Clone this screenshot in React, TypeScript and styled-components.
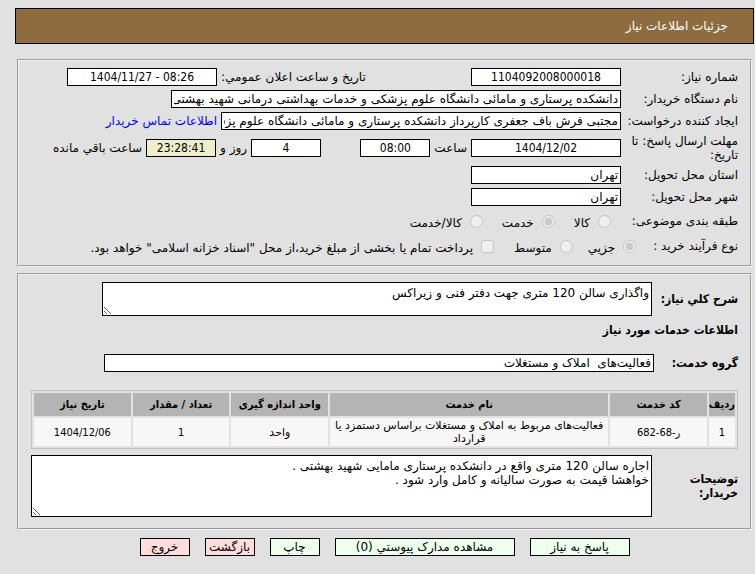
import React from "react";
import styled, { createGlobalStyle } from "styled-components";

const wide = `"DejaVu Sans", sans-serif`;
const condensed = `"DejaVu Sans Condensed", "DejaVu Sans", sans-serif`;

const GlobalStyle = createGlobalStyle`
  *, *::before, *::after { box-sizing: border-box; }
  body {
    margin: 0;
    background: #e1e1e1;
    color: #000;
    font: 12px/14px ${wide};
  }
  input, textarea, button { font: inherit; color: inherit; margin: 0; border-radius: 0; }
`;

const Page = styled.main`
  direction: rtl;
  padding: 8px 1px 8px 15px;
`;

const TitleBar = styled.header`
  display: flex;
  align-items: center;
  height: 36px;
  padding: 0 25px;
  border: 1px solid #000;
  background: #8f6c3f;
  color: #fff;
`;

const Title = styled.h1`
  margin: 0;
  font-size: 12px;
  font-weight: 400;
`;

const Panel = styled.section<{ $first?: boolean }>`
  display: flex;
  flex-direction: column;
  gap: 4px;
  margin: ${(p) => (p.$first ? "15px 2px 0" : "6px 2px 0")};
  padding: ${(p) => (p.$first ? "7px 12px 9px" : "7px 12px 11px")};
  border: 2px groove #f0f0f0;
`;

const Row = styled.div<{ $height?: number }>`
  display: flex;
  align-items: center;
  gap: 4px;
  min-height: ${(p) => p.$height ?? 18}px;
`;

const FieldLabel = styled.label`
  flex: 0 0 113px;
`;

const RowName = styled.span`
  flex: 0 0 113px;
  white-space: nowrap;
`;

const InlineLabel = styled.label`
  white-space: nowrap;
`;

const Announce = styled.div`
  display: flex;
  align-items: center;
  gap: 4px;
  margin-inline: auto 36px;
`;

const Remaining = styled.div`
  display: flex;
  align-items: center;
  gap: 4px;
  margin-inline: auto 22px;
`;

const TextBox = styled.input<{ $width: number; $number?: boolean; $tint?: boolean }>`
  flex: 0 1 ${(p) => p.$width}px;
  width: ${(p) => p.$width}px;
  min-width: 0;
  height: 18px;
  padding: 1px 2px;
  border: 1px solid #000;
  background: ${(p) => (p.$tint ? "#eeeecc" : "#fff")};
  font-family: ${(p) => (p.$number ? condensed : wide)};
  text-align: ${(p) => (p.$number ? "center" : "start")};
`;

const Choice = styled.label`
  display: flex;
  align-items: center;
  gap: 8px;
  white-space: nowrap;
  span { padding-top: 4px; }
`;

const Choices = styled.div<{ $gap: number; $inset: number }>`
  display: flex;
  gap: ${(p) => p.$gap}px;
  padding-inline-start: ${(p) => p.$inset}px;
`;

const Tick = styled.input`
  width: 13px;
  height: 13px;
  flex: none;
`;

const BoldLabel = styled.label<{ $width: number }>`
  flex: 0 0 ${(p) => p.$width}px;
  font-family: ${condensed};
  font-weight: 700;
`;

const TextArea = styled.textarea<{ $height: number }>`
  flex: 1 1 0;
  min-width: 0;
  height: ${(p) => p.$height}px;
  padding: 3px 2px;
  border: 1px solid #000;
  background: #fff;
  overflow: hidden;
`;

const InsetRow = styled(Row)<{ $inset: number }>`
  padding-inline-end: ${(p) => p.$inset}px;
`;

const WideBox = styled(TextBox)`
  flex: 1 1 0;
`;

const Heading = styled.h2`
  margin: 3px 0 13px;
  font: 700 12px/14px ${condensed};
`;

const Items = styled.table`
  width: 100%;
  margin: 14px 0 2px;
  border: 1px solid #c0c0c0;
  border-collapse: separate;
  border-spacing: 2px;
  table-layout: fixed;
  font-size: 11px;
  line-height: 13px;
  text-align: center;
`;

const HeadCell = styled.th<{ $width?: string }>`
  width: ${(p) => p.$width ?? "auto"};
  height: 23px;
  padding: 0;
  background: #b4b4b4;
  font-family: ${condensed};
  white-space: nowrap;
`;

const Cell = styled.td<{ $number?: boolean }>`
  height: 28px;
  padding: 1px 2px;
  background: #f7f7f7;
  font-family: ${(p) => (p.$number ? condensed : wide)};
`;

const Actions = styled.footer`
  display: flex;
  justify-content: center;
  gap: 15px;
  margin-top: 8px;
`;

const Action = styled.button<{ $width: number; $leave?: boolean }>`
  width: ${(p) => p.$width}px;
  height: 18px;
  padding: 0;
  border: 1px solid #000;
  background: ${(p) => (p.$leave ? "#ffdddd" : "#eeffee")};
  white-space: nowrap;
`;

const Contact = styled.a`
  color: #0000ff;
  text-decoration: none;
  white-space: nowrap;
`;

const columns: { name: string; width?: string; number?: boolean }[] = [
  { name: "ردیف", width: "26px", number: true },
  { name: "کد خدمت", width: "14%", number: true },
  { name: "نام خدمت" },
  { name: "واحد اندازه گیری", width: "14%" },
  { name: "تعداد / مقدار", width: "14%", number: true },
  { name: "تاریخ نیاز", width: "14%", number: true },
];

const rows = [
  ["1", "ر-68-682", "فعالیت‌های مربوط به املاک و مستغلات براساس دستمزد یا قرارداد", "واحد", "1", "1404/12/06"],
];

const actions = [
  { text: "پاسخ به نیاز", width: 100 },
  { text: "مشاهده مدارک پیوستي (0)", width: 180 },
  { text: "چاپ", width: 50 },
  { text: "بازگشت", width: 50, leave: true },
  { text: "خروج", width: 50, leave: true },
];

export default function App() {
  return (
    <Page lang="fa">
      <GlobalStyle />
      <TitleBar>
        <Title>جزئیات اطلاعات نیاز</Title>
      </TitleBar>

      <Panel $first>
        <Row>
          <FieldLabel htmlFor="number">شماره نیاز:</FieldLabel>
          <TextBox id="number" $width={150} $number readOnly value="1104092008000018" />
          <Announce>
            <InlineLabel htmlFor="announced">تاریخ و ساعت اعلان عمومي:</InlineLabel>
            <TextBox id="announced" $width={150} $number readOnly dir="ltr" value="1404/11/27 - 08:26" />
          </Announce>
        </Row>
        <Row>
          <FieldLabel htmlFor="buyer">نام دستگاه خریدار:</FieldLabel>
          <TextBox
            id="buyer"
            $width={450}
            readOnly
            value="دانشکده پرستاری و مامائی دانشگاه علوم پزشکی و خدمات بهداشتی درمانی شهید بهشتی"
          />
        </Row>
        <Row>
          <FieldLabel htmlFor="creator">ایجاد کننده درخواست:</FieldLabel>
          <TextBox
            id="creator"
            $width={400}
            readOnly
            value="مجتبی فرش باف جعفری کارپرداز دانشکده پرستاری و مامائی دانشگاه علوم پزشکی و خدمات بهداشتی درمانی شهید بهشتی"
          />
          <Contact href="#contact">اطلاعات تماس خریدار</Contact>
        </Row>
        <Row $height={28}>
          <FieldLabel htmlFor="due-date">مهلت ارسال پاسخ: تا تاریخ:</FieldLabel>
          <TextBox id="due-date" $width={150} $number readOnly value="1404/12/02" />
          <InlineLabel htmlFor="due-time">ساعت</InlineLabel>
          <TextBox id="due-time" $width={70} $number readOnly value="08:00" />
          <Remaining>
            <TextBox id="days" $width={70} $number readOnly value="4" />
            <InlineLabel htmlFor="days">روز و</InlineLabel>
            <TextBox id="clock" $width={70} $number $tint readOnly value="23:28:41" />
            <InlineLabel htmlFor="clock">ساعت باقي مانده</InlineLabel>
          </Remaining>
        </Row>
        <Row>
          <FieldLabel htmlFor="province">استان محل تحویل:</FieldLabel>
          <TextBox id="province" $width={150} readOnly value="تهران" />
        </Row>
        <Row>
          <FieldLabel htmlFor="city">شهر محل تحویل:</FieldLabel>
          <TextBox id="city" $width={150} readOnly value="تهران" />
        </Row>
        <Row $height={22}>
          <RowName>طبقه بندی موضوعی:</RowName>
          <Choices $gap={19} $inset={10} role="radiogroup" aria-label="طبقه بندی موضوعی">
            <Choice><Tick type="radio" name="kind" disabled /><span>کالا</span></Choice>
            <Choice><Tick type="radio" name="kind" disabled defaultChecked /><span>خدمت</span></Choice>
            <Choice><Tick type="radio" name="kind" disabled /><span>کالا/خدمت</span></Choice>
          </Choices>
        </Row>
        <Row $height={20}>
          <InlineLabel as="span">نوع فرآیند خرید :</InlineLabel>
          <Choices $gap={15} $inset={13} role="radiogroup" aria-label="نوع فرآیند خرید">
            <Choice><Tick type="radio" name="process" disabled defaultChecked /><span>جزیي</span></Choice>
            <Choice><Tick type="radio" name="process" disabled /><span>متوسط</span></Choice>
          </Choices>
          <Choices $gap={15} $inset={16}>
            <Choice>
              <Tick type="checkbox" disabled />
              <span>پرداخت تمام یا بخشی از مبلغ خرید،از محل "اسناد خزانه اسلامی" خواهد بود.</span>
            </Choice>
          </Choices>
        </Row>
      </Panel>

      <Panel>
        <InsetRow $inset={71}>
          <BoldLabel htmlFor="summary" $width={82}>شرح کلي نیاز:</BoldLabel>
          <TextArea id="summary" $height={34} readOnly value="واگذاری سالن 120 متری جهت دفتر فنی و زیراکس" />
        </InsetRow>
        <Heading>اطلاعات خدمات مورد نیاز</Heading>
        <InsetRow $inset={73}>
          <BoldLabel htmlFor="group" $width={80}>گروه خدمت:</BoldLabel>
          <WideBox id="group" $width={550} readOnly value="فعالیت‌های  املاک و مستغلات" />
        </InsetRow>
        <Items>
          <thead>
            <tr>
              {columns.map((c) => (
                <HeadCell key={c.name} $width={c.width} scope="col">{c.name}</HeadCell>
              ))}
            </tr>
          </thead>
          <tbody>
            {rows.map((r) => (
              <tr key={r[0]}>
                {r.map((v, i) => <Cell key={i} $number={columns[i].number}>{v}</Cell>)}
              </tr>
            ))}
          </tbody>
        </Items>
        <Row>
          <BoldLabel htmlFor="notes" $width={82}>توضیحات خریدار:</BoldLabel>
          <TextArea
            id="notes"
            $height={62}
            readOnly
            value={"اجاره سالن 120 متری واقع در دانشکده پرستاری مامایی شهید بهشتی .\nخواهشا قیمت به صورت سالیانه و کامل وارد شود ."}
          />
        </Row>
      </Panel>

      <Actions>
        {actions.map((a) => (
          <Action key={a.text} type="button" $width={a.width} $leave={a.leave}>{a.text}</Action>
        ))}
      </Actions>
    </Page>
  );
}
